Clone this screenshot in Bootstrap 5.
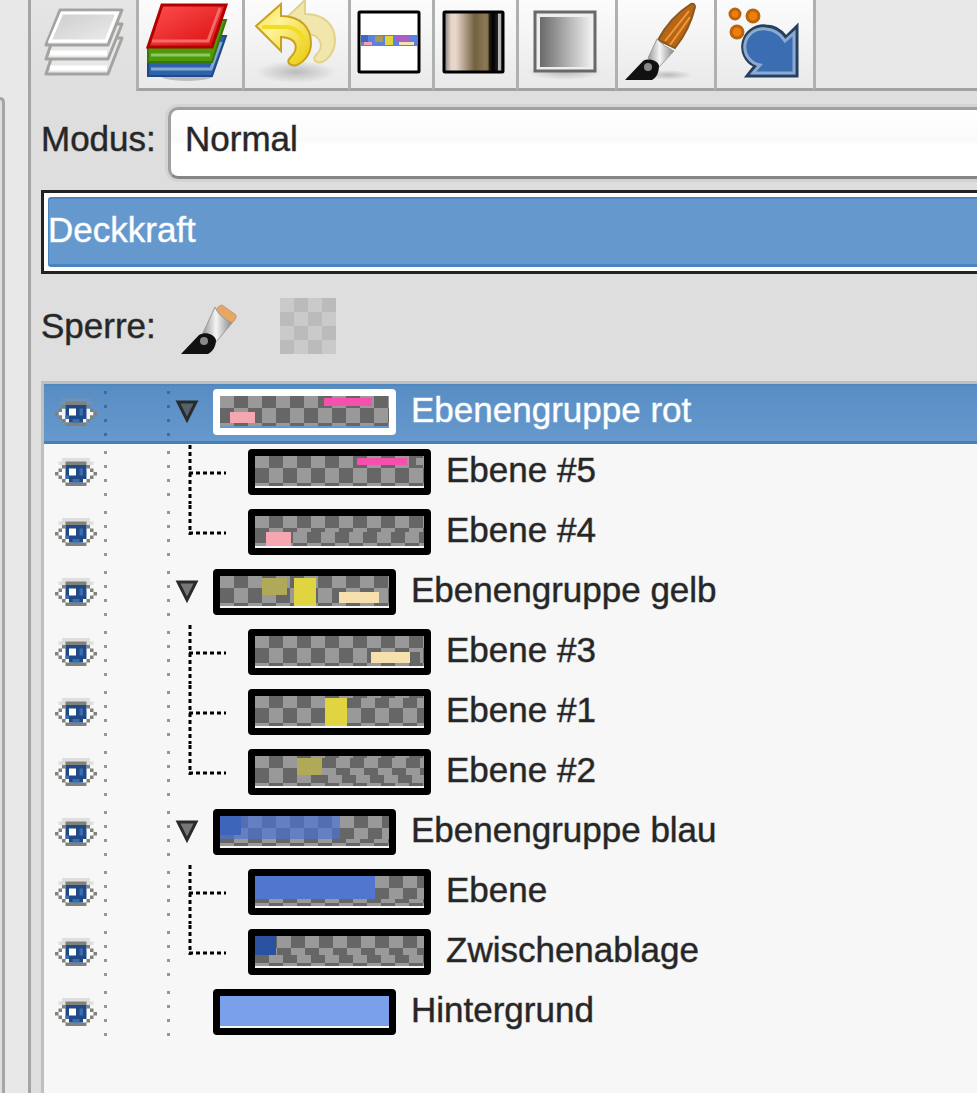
<!DOCTYPE html>
<html lang="de">
<head>
<meta charset="utf-8">
<meta name="viewport" content="width=device-width, initial-scale=1">
<title>Ebenen</title>
<link href="https://cdn.jsdelivr.net/npm/bootstrap@5.3.0/dist/css/bootstrap.min.css" rel="stylesheet">
<style>
body{font-family:"Liberation Sans",Arial,sans-serif;font-size:35px;line-height:52px;color:#262626;background:#e8e8e8;overflow-x:hidden;-webkit-text-stroke:1px transparent}
body,.mode,.opacity-box label,.layer{-webkit-text-stroke-color:color-mix(in srgb,currentColor 45%,transparent)}
button{border:0;background:none;padding:0;color:inherit}
svg{display:block;flex:none}
.gutter{width:28px}
.pane-edge{width:5px;margin-top:97px;border:solid #a5a5a5;border-width:3px 3px 0 0;border-top-right-radius:8px;background:#dedede}
.dock{border-left:3px solid #a5a5a5;background:#dedede;min-width:0}
.tabs{height:91px;background:#e7e7e7}
.tab{border-left:3px solid #b0b0b0;border-bottom:3px solid #a2a2a2;background:linear-gradient(#fcfcfc,#e9e9e9);width:84px;height:91px}
.tab.wide{width:106px}
.tab.mid{width:99px}
.tab.current{width:105px;border:0;background:linear-gradient(#e5e5e5,#dedede)}
.tab-rest{border-left:3px solid #b0b0b0;border-bottom:3px solid #a2a2a2}
.options{padding:16px 0 0 10px}
.mode-label{width:127px;padding-bottom:8px}
.mode{appearance:none;height:72px;border:solid #a0a0a0;border-width:3px 0 3px 3px;border-bottom-color:#858585;border-radius:10px 0 0 10px;background:linear-gradient(#fff 0,#fafafa 45%,#fff 55%,#fff);padding:0 0 8px 14px;color:#262626;box-shadow:0 0 0 3px #d3d3d3;min-width:0}
.opacity-box{height:84px;margin-top:11px;border:3px solid #222;border-right:0;background:#fff;padding:4px 0 4px 4px}
.opacity-box input{appearance:none;width:100%;height:70px;background:#6598cd;border:solid #4a83bd;border-width:2px 0 3px 1px;border-radius:3px 0 0 3px;margin:0;display:block}
.opacity-box input::-webkit-slider-thumb{appearance:none;width:0;height:0}
.opacity-box label{left:4px;top:11px;color:#fff}
.locks{height:107px;padding-bottom:3px}
.locks span{width:138px}
.lock-alpha{margin-left:41px}
.layer-list{border:solid #bfbfbf;border-width:3px 0 0 3px;background:#f7f7f7;margin-left:10px;color:#262626}
.layer{height:60px}
.layer.selected{background:linear-gradient(#588dc4,#6699cd);border-top:2px solid #4f87c0;border-bottom:3px solid #4680b9;color:#fff}
.layer.selected>*{margin-top:-2px}
.eye-cell{width:60px;padding:14px 0 0 11px}
.dots{width:3px;height:56px;background:linear-gradient(transparent 7px,#969696 7px,#969696 10px,transparent 10px) 0 0/3px 14px}
.selected .dots{background-image:linear-gradient(transparent 7px,#426a96 7px,#426a96 10px,transparent 10px)}
.link-cell{width:60px;height:56px}
.thumb{border:7px solid #000;border-radius:4px;height:46px;margin-top:5px}
.layer.selected>.thumb{border-color:#fff;margin-top:3px}
.layer-name{padding-left:15px}
</style>
</head>
<body>
<div class="d-flex min-vh-100">
  <div class="gutter d-flex flex-shrink-0"><div class="pane-edge"></div></div>
  <main class="dock flex-grow-1 d-flex flex-column">
    <nav class="tabs d-flex" aria-label="Dialoge">
      <button class="tab current" aria-label="Ebenen">
        <svg width="105" height="88" viewBox="31 0 105 88"><defs><linearGradient id="paper" x2="1" y2="1"><stop stop-color="#ccc"/><stop offset="1" stop-color="#ececec"/></linearGradient></defs>
          <g stroke="#a3a49f" stroke-width="3" stroke-linejoin="round" fill="#e8e8e8"><path d="M58 36h64l-14 36H46z"/><path d="M58 22h64l-14 35H46z"/><path d="M60 8h62l-14 35H46z"/></g>
          <path d="M62 11h55l-11 28H50z" fill="url(#paper)" stroke="#fff" stroke-width="3"/><path d="M50 51h57M50 66h57" stroke="#fff" stroke-width="5"/></svg>
      </button>
      <button class="tab wide" aria-label="Kanäle">
        <svg width="103" height="88" viewBox="139 0 103 88"><defs><linearGradient id="red" x2="1" y2="1"><stop stop-color="#ff5050"/><stop offset="1" stop-color="#d90d0d"/></linearGradient></defs>
          <ellipse cx="187" cy="76" rx="26" ry="5" fill="#bbb"/>
          <path d="M148 61l14-25h64l-14 40h-64z" fill="#2d62a8" stroke="#204a87" stroke-width="2"/><path d="M151 69h60l10-27" fill="none" stroke="#85a9d6" stroke-width="3"/>
          <path d="M148 48l14-28h64l-14 42h-64z" fill="#4e9a06" stroke="#38750a" stroke-width="2"/><path d="M151 55h59" stroke="#91c76c" stroke-width="3"/>
          <path d="M162 5h64l-14 42h-64z" fill="url(#red)" stroke="#b10000" stroke-width="3"/><path d="M152 41h56l12-33" fill="none" stroke="#f36b6b" stroke-width="3"/></svg>
      </button>
      <button class="tab wide" aria-label="Journal">
        <svg width="103" height="88" viewBox="245 0 103 88"><defs><radialGradient id="shade"><stop stop-color="#bbb"/><stop offset="1" stop-color="#bbb" stop-opacity="0"/></radialGradient><linearGradient id="gold" y2="1"><stop stop-color="#f2dc3f"/><stop offset=".35" stop-color="#fff39a"/><stop offset="1" stop-color="#e8c800"/></linearGradient></defs>
          <ellipse cx="296" cy="72" rx="40" ry="11" fill="url(#shade)"/>
          <path d="M280 24L305 0v14c20 0 30 12 30 26 0 11-6 19-13 22-6 2-10-3-6-7 9-8 5-22-11-21v14z" fill="#f1e7ad" stroke="#e2d28a" stroke-width="2"/>
          <path d="M256 26L281 4v12c20 0 30 12 30 27 0 11-7 19-14 22-7 2-11-3-7-7 10-10 7-20-9-21v14z" fill="url(#gold)" stroke="#c9a21c" stroke-width="2"/><path d="M262 27h26q12 2 16 14" fill="none" stroke="#f0dc20" stroke-width="4"/></svg>
      </button>
      <button class="tab" aria-label="Bild">
        <svg width="81" height="88" viewBox="351 0 81 88"><rect x="359" y="12" width="60" height="60" rx="1" fill="#fff" stroke="#000" stroke-width="3"/>
          <path fill="#5b82e0" d="M361 35h56v11h-56z"/><path fill="#3e67bd" d="M361 35h7v7h-7z"/><path fill="#aa5fc5" d="M396 36h14v6h-14z"/><path fill="#a99b54" d="M375 36h8v6h-8z"/><path fill="#e0d43e" d="M385 36h8v9h-8z"/><path fill="#f5a0aa" d="M364 42h8v3h-8z"/><path fill="#f5dfad" d="M399 42h15v3h-15z"/></svg>
      </button>
      <button class="tab" aria-label="Farbverlauf">
        <svg width="81" height="88" viewBox="435 0 81 88"><defs><linearGradient id="sepia"><stop stop-color="#777"/><stop offset=".12" stop-color="#e8d4c8"/><stop offset=".2" stop-color="#ead7cc"/><stop offset=".52" stop-color="#73613f"/><stop offset=".7" stop-color="#8b7955"/><stop offset=".75" stop-color="#816f4b"/><stop offset=".76" stop-color="#29231a"/><stop offset=".83" stop-color="#000"/><stop offset=".91" stop-color="#222"/><stop offset=".92" stop-color="#bbb"/><stop offset=".97" stop-color="#aaa"/><stop offset=".98" stop-color="#111"/></linearGradient></defs><rect x="444" y="12" width="59" height="60" rx="1" fill="url(#sepia)" stroke="#000" stroke-width="3"/></svg>
      </button>
      <button class="tab mid" aria-label="Verläufe">
        <svg width="96" height="88" viewBox="519 0 96 88"><defs><linearGradient id="grey"><stop stop-color="#6a6a6a"/><stop offset="1" stop-color="#eee"/></linearGradient></defs><ellipse cx="565" cy="72" rx="38" ry="8" fill="url(#shade)"/><rect x="535" y="12" width="60" height="59" fill="#eee" stroke="#686b64" stroke-width="3"/><path d="M540 17h51v50h-51z" fill="url(#grey)"/></svg>
      </button>
      <button class="tab mid" aria-label="Pinsel">
        <svg width="96" height="88" viewBox="618 0 96 88"><defs><linearGradient id="metal"><stop stop-color="#999"/><stop offset=".45" stop-color="#f5f5f5"/><stop offset="1" stop-color="#888"/></linearGradient></defs><ellipse cx="668" cy="75" rx="24" ry="5" fill="url(#shade)"/>
          <path d="M658 40C666 25 678 12 691 4q4-1 4 3-5 22-20 41z" fill="#b86516" stroke="#8a5720" stroke-width="2"/><path d="M665 41L689 11M670 45L690 17" stroke="#f09a3a" stroke-width="2"/>
          <path d="M657 39q7 8 17 12l-15 16-11-9z" fill="url(#metal)" stroke="#999"/><path d="M625 80l18-19c5-3 15-1 16 5 0 7-3 12-7 14z" fill="#111"/><circle cx="648" cy="67" r="4" fill="#888"/></svg>
      </button>
      <button class="tab mid" aria-label="Pinseldynamik">
        <svg width="96" height="88" viewBox="716 0 96 88"><g fill="#f07c0c" stroke="#b8640f" stroke-width="3"><circle cx="734" cy="14" r="5"/><circle cx="752" cy="16" r="6"/><circle cx="736" cy="32" r="6"/></g>
          <path d="M746 76l8-10A21 21 0 0 1 765 26Q777 26 785 37l11-11v50z" fill="#3b6db3" stroke="#263f5d" stroke-width="3"/><path d="M752 73l7-8A18 18 0 0 1 765 29Q777 30 784 41l9-8v40z" fill="none" stroke="#8caad0" stroke-width="3"/></svg>
      </button>
      <div class="tab-rest flex-grow-1"></div>
    </nav>

    <form class="options">
      <div class="d-flex align-items-center">
        <label class="mode-label flex-shrink-0" for="mode">Modus:</label>
        <select class="mode flex-grow-1" id="mode"><option>Normal</option></select>
      </div>
      <div class="opacity-box position-relative">
        <input type="range" id="opacity" min="0" max="100" value="100">
        <label class="position-absolute" for="opacity">Deckkraft</label>
      </div>
      <div class="locks d-flex align-items-center">
        <span>Sperre:</span>
        <button type="button" aria-label="Pixel sperren">
          <svg width="60" height="56" viewBox="179 299 60 56"><path d="M216 311q3-5 6-5l14 10q1 4-5 9l-18-12z" fill="#e6a664" stroke="#c99a6a"/><path d="M215 308q3 9 17 16l-16 19-13-9z" fill="url(#metal)" stroke="#999"/><path d="M181 355l18-19c6-4 15-1 17 5 0 7-4 12-8 14z" fill="#111"/><circle cx="204" cy="342" r="4" fill="#888"/></svg>
        </button>
        <button type="button" class="lock-alpha" aria-label="Alphakanal sperren">
          <svg width="56" height="56" viewBox="7 0 56 56"><path fill="#cacaca" d="M7 0h56v56H7z"/><path fill="#bbb" d="M21 0h14v14H21zM49 0h14v14H49zM7 14h14v14H7zM35 14h14v14H35zM21 28h14v14H21zM49 28h14v14H49zM7 42h14v14H7zM35 42h14v14H35z"/></svg>
        </button>
      </div>
    </form>

    <div class="layer-list flex-grow-1" id="layers"></div>
  </main>
</div>

<svg width="0" height="0" class="position-absolute" aria-hidden="true">
  <symbol id="eye" viewBox="0 0 12 8">
    <path fill="#999" fill-opacity=".25" d="M2 0h8v1h1v1H1V1h1z"/>
    <path fill="#fff" fill-opacity=".9" d="M3 2h6v1h1v1h1v1h-1v1H9v1H3V6H2V5H1V4h1V3h1z"/>
    <path fill="#80827a" d="M3 1h6v1H3zM2 2h1v1H2zM9 2h1v1H9zM1 3h1v1H1zM10 3h1v1h-1zM0 4h1v1H0zM11 4h1v1h-1zM1 5h1v1H1zM10 5h1v1h-1zM2 6h1v1H2zM9 6h1v1H9zM3 7h6v1H3z"/>
    <path fill="#204a87" d="M3 2h6v4H8v1H4V6H3z"/><path fill="#3a6cae" d="M7 3h1v2H7zM5 6h2v1H5zM3 5h1v1H3z"/><path fill="#fff" d="M4 3h2v2H4z"/></symbol>
  <symbol id="arrow" viewBox="0 0 24 24"><path d="M3 2h18L12 20z" fill="#555" fill-opacity=".8" stroke="#2a2a2a" stroke-width="3"/></symbol>
</svg>

<script src="https://cdn.jsdelivr.net/npm/bootstrap@5.3.0/dist/js/bootstrap.bundle.min.js"></script>
<script>
// Checkerboard bands of a thumbnail: [x, y, height, offset of the first dark cell]
const base = [[0,0,12,14],[0,12,15,0],[0,27,3,14]];
const layers = [
  {name:'Ebenengruppe rot', group:1, selected:1, fills:[[10,16,25,11,'#f5a7af'],[104,2,48,8,'#f650ae']]},
  {name:'Ebene #5', fills:[[102,2,50,7,'#f650ae'],[161,2,8,7,'#999']]},
  {name:'Ebene #4', last:1, bands:[[36,16,11,-4],[36,27,3,10]], fills:[[11,16,25,14,'#f5a7af']]},
  {name:'Ebenengruppe gelb', group:1, fills:[[42,2,25,17,'#b0a957'],[74,2,22,28,'#e0d540'],[119,16,40,11,'#f5e0ae']]},
  {name:'Ebene #3', fills:[[116,16,39,11,'#f5e0ae'],[155,16,10,11,'#666']]},
  {name:'Ebene #1', bands:[[92,2,10,8],[92,12,15,-6],[92,27,3,8]], fills:[[70,2,22,28,'#e0d540']]},
  {name:'Ebene #2', last:1, bands:[[67,2,10,11],[67,12,7,-3],[67,19,8,3]], fills:[[42,2,25,17,'#b0a957']]},
  {name:'Ebenengruppe blau', group:1, bands:[[120,0,12,22],[120,12,11,8],[0,23,4,0]], fills:[[0,0,120,23,'#4a74d8a8'],[0,0,21,19,'#3d66bb']]},
  {name:'Ebene', bands:[[120,0,12,22],[120,12,11,8],[0,23,4,0]], fills:[[0,0,120,23,'#5076d0']]},
  {name:'Zwischenablage', last:1, bands:[[21,0,12,8],[21,12,7,-6],[0,19,8,0]], fills:[[0,0,21,19,'#2a519f']]},
  {name:'Hintergrund', root:1, fills:[[0,0,169,30,'#7ba0eb']]}
];
const rect = (x,y,w,h,c) => `<rect x="${x}" y="${y}" width="${w}" height="${h}" fill="${c}"/>`;
function band([x,y,h,dark]) {
  let out = rect(x,y,169-x,h,'#999');
  for (let d = dark; d < 169; d += 28) {
    const left = Math.max(x,d), width = Math.min(169,d+14) - left;
    if (width > 0) out += rect(left,y,width,h,'#666');
  }
  return out;
}
function tree(l) {
  if (l.root) return '<svg width="43" height="56"></svg>';
  if (l.group) return '<button class="d-flex" aria-label="Gruppe einklappen"><svg width="43" height="56"><use href="#arrow" x="5" y="16" width="24" height="24"/></svg></button>';
  return `<svg width="78" height="60"><path d="M20 1V${l.last ? 31 : 60}" stroke="#000" stroke-width="3" stroke-dasharray="4 3"/><path d="M19 29H56" stroke="#000" stroke-width="3" stroke-dasharray="4 3"/></svg>`;
}
document.getElementById('layers').innerHTML = layers.map(l => `
  <div class="layer d-flex align-items-start${l.selected ? ' selected' : ''}">
    <button class="eye-cell flex-shrink-0" aria-label="Sichtbarkeit"><svg width="42" height="28"><use href="#eye" width="42" height="28"/></svg></button>
    <div class="dots"></div><div class="link-cell"></div><div class="dots"></div>
    ${tree(l)}
    <div class="thumb flex-shrink-0"><svg width="169" height="32" shape-rendering="crispEdges">${rect(0,0,169,32,l.selected ? '#6598cd' : '#f7f7f7')}${base.concat(l.bands || []).map(band).join('')}${l.fills.map(f => rect(...f)).join('')}</svg></div>
    <div class="layer-name text-nowrap">${l.name}</div>
  </div>`).join('');
</script>
</body>
</html>
